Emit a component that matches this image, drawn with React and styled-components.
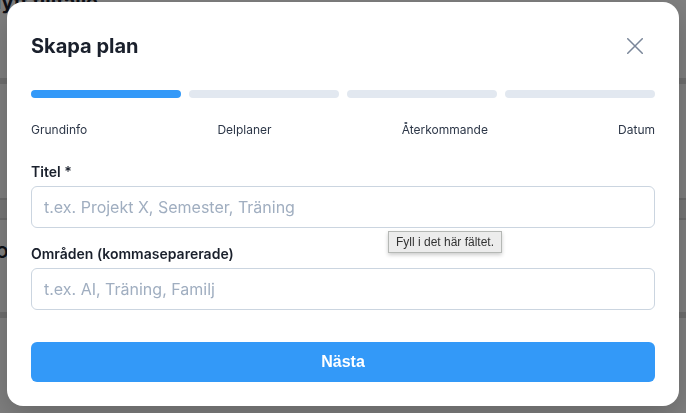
import React from 'react'
import styled, { createGlobalStyle } from 'styled-components'

const GlobalStyle = createGlobalStyle`
  html, body {
    margin: 0;
    padding: 0;
    background: #ffffff;
    font-family: Inter, "Noto Sans", sans-serif;
  }
`

const Page = styled.div`
  width: 686px;
  height: 413px;
  overflow: hidden;
`

const PageTitle = styled.h1`
  margin: 0;
  margin-left: -14px;
  margin-top: -10px;
  font-size: 20px;
  line-height: 24px;
  font-weight: 700;
  color: #1a202c;
`

const PageBand = styled.div`
  height: 6px;
  background: #dcdcdc;
  margin-top: ${(p) => p.$top}px;
`

const PageBox = styled.div`
  height: 18px;
  margin-top: ${(p) => p.$top}px;
  border-top: 2px solid #d8d8d8;
  border-bottom: 2px solid #d8d8d8;
  background: #eeeeee;
`

const PageText = styled.p`
  margin: 22px 0 0 -4px;
  font-size: 16px;
  font-weight: 700;
  color: #1a202c;
`

const Overlay = styled.div`
  position: fixed;
  inset: 0;
  background: rgba(0, 0, 0, 0.5);
  display: flex;
  justify-content: center;
  align-items: flex-start;
  padding-top: 2px;
`

const Modal = styled.div`
  width: 672px;
  box-sizing: border-box;
  background: #ffffff;
  border-radius: 16px;
  padding: 24px;
  box-shadow: 0 10px 30px rgba(0, 0, 0, 0.2);
`

const Header = styled.div`
  display: flex;
  justify-content: space-between;
  align-items: center;
  height: 40px;
`

const Title = styled.h2`
  margin: 0;
  font-size: 20px;
  line-height: 28px;
  font-weight: 700;
  color: #1a202c;
`

const CloseButton = styled.button`
  width: 40px;
  height: 40px;
  border: none;
  background: transparent;
  padding: 0;
  display: flex;
  align-items: center;
  justify-content: center;
  color: #7a8699;
  cursor: pointer;
`

const Progress = styled.div`
  display: grid;
  grid-template-columns: repeat(4, 1fr);
  gap: 8px;
  margin-top: 24px;
`

const Segment = styled.div`
  height: 8px;
  border-radius: 4px;
  background: ${(p) => (p.$active ? '#3399f8' : '#e2e8f0')};
`

const Steps = styled.div`
  display: flex;
  justify-content: space-between;
  margin-top: 23px;
  font-size: 12px;
  line-height: 18px;
  color: #2d3748;
`

const Field = styled.div`
  position: relative;
  display: flex;
  flex-direction: column;
  gap: 4px;
  margin-top: ${(p) => p.$top}px;
`

const Label = styled.label`
  font-size: 14px;
  line-height: 20px;
  font-weight: 600;
  color: #1a202c;
`

const Input = styled.input`
  height: 42px;
  box-sizing: border-box;
  border: 1px solid #cbd5e0;
  border-radius: 6px;
  padding: 0 12px;
  font-family: Inter, "Noto Sans", sans-serif;
  font-size: 16px;
  color: #1a202c;
  outline: none;
  &::placeholder {
    color: #a0aec0;
  }
`

const Tooltip = styled.div`
  position: absolute;
  top: calc(100% + 3px);
  left: 357px;
  padding: 3px 7px;
  background: #ececec;
  border: 1px solid #b5b8b5;
  box-shadow: 0 2px 4px rgba(0, 0, 0, 0.2);
  font-family: "Liberation Sans", Arial, sans-serif;
  font-size: 12px;
  line-height: 14px;
  color: #333333;
  white-space: nowrap;
`

const NextButton = styled.button`
  display: block;
  width: 100%;
  height: 40px;
  margin-top: 32px;
  padding-top: 1px;
  border: none;
  border-radius: 6px;
  background: #3399f8;
  color: #ffffff;
  font-family: "Liberation Sans", Arial, sans-serif;
  font-size: 16px;
  font-weight: 700;
  cursor: pointer;
`

const steps = ['Grundinfo', 'Delplaner', 'Återkommande', 'Datum']

function App() {
  return (
    <>
      <GlobalStyle />
      <Page aria-hidden="true">
        <PageTitle>Nytt tillfälle</PageTitle>
        <PageBand $top={64} />
        <PageBox $top={114} />
        <PageText>Områden</PageText>
        <PageBand $top={50} />
      </Page>
      <Overlay>
        <Modal>
          <Header>
            <Title>Skapa plan</Title>
            <CloseButton aria-label="Stäng">
              <svg width="16" height="16" viewBox="0 0 16 16" fill="none" stroke="currentColor" strokeWidth="1.5" strokeLinecap="round">
                <path d="M0.75 0.75L15.25 15.25M15.25 0.75L0.75 15.25" />
              </svg>
            </CloseButton>
          </Header>
          <Progress>
            {steps.map((s, i) => (
              <Segment key={s} $active={i === 0} />
            ))}
          </Progress>
          <Steps>
            {steps.map((s) => (
              <span key={s}>{s}</span>
            ))}
          </Steps>
          <Field $top={23}>
            <Label>Titel *</Label>
            <Input placeholder="t.ex. Projekt X, Semester, Träning" />
            <Tooltip>Fyll i det här fältet.</Tooltip>
          </Field>
          <Field $top={16}>
            <Label>Områden (kommaseparerade)</Label>
            <Input placeholder="t.ex. AI, Träning, Familj" />
          </Field>
          <NextButton>Nästa</NextButton>
        </Modal>
      </Overlay>
    </>
  )
}

export default App
